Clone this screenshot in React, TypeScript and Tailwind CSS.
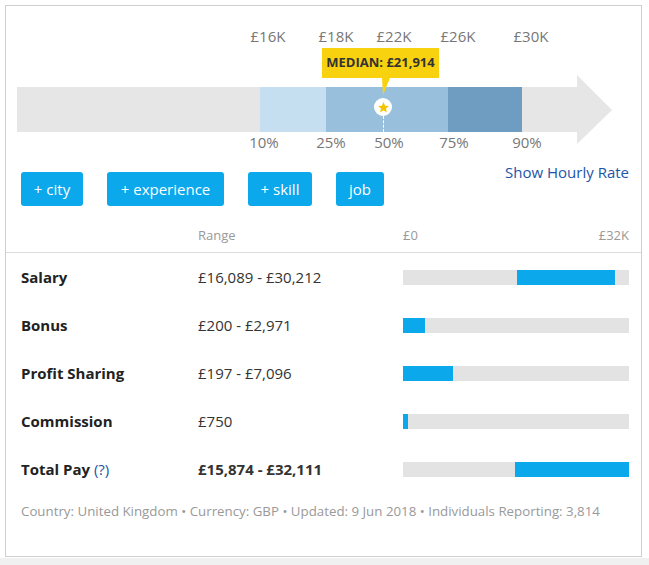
import React from 'react';

const topLabels = [
  { text: '£16K', x: 262 },
  { text: '£18K', x: 330 },
  { text: '£22K', x: 388 },
  { text: '£26K', x: 452 },
  { text: '£30K', x: 525 },
];

const pctLabels = [
  { text: '10%', x: 258 },
  { text: '25%', x: 325 },
  { text: '50%', x: 383 },
  { text: '75%', x: 448 },
  { text: '90%', x: 521 },
];

interface PayRow {
  label: string;
  range: string;
  left: number;
  width: number;
  bold?: boolean;
  help?: boolean;
}

const rows: PayRow[] = [
  { label: 'Salary', range: '£16,089 - £30,212', left: 114, width: 98 },
  { label: 'Bonus', range: '£200 - £2,971', left: 0, width: 22 },
  { label: 'Profit Sharing', range: '£197 - £7,096', left: 0, width: 50 },
  { label: 'Commission', range: '£750', left: 0, width: 5 },
  { label: 'Total Pay', range: '£15,874 - £32,111', left: 112, width: 114, bold: true, help: true },
];

function SalaryChart() {
  return (
    <div className="relative h-[166px]">
      {topLabels.map((l) => (
        <span
          key={l.text}
          className="absolute top-[20px] -translate-x-1/2 text-[15px] leading-[20px] text-[#777]"
          style={{ left: l.x }}
        >
          {l.text}
        </span>
      ))}

      {/* bar */}
      <div className="absolute left-[11px] top-[81px] flex h-[45px] w-[560px] bg-[#e6e6e6]">
        <div className="ml-[243px] w-[66px] bg-[#c6dff0]" />
        <div className="w-[122px] bg-[#98c0dc]" />
        <div className="w-[74px] bg-[#6f9cc1]" />
      </div>
      <svg className="absolute left-[571px] top-[69px]" width="35" height="69" viewBox="0 0 35 69">
        <polygon points="0,0 35,35 0,69" fill="#e6e6e6" />
      </svg>

      {/* median marker */}
      <div className="absolute left-[377px] top-[110px] h-[16px] border-l border-dashed border-white" />
      <div className="absolute left-[368px] top-[92px] flex h-[18px] w-[18px] items-center justify-center rounded-full bg-white">
        <svg width="13" height="13" viewBox="0 0 24 24">
          <polygon
            points="12,2 14.9,8.6 22,9.3 16.6,14 18.2,21 12,17.3 5.8,21 7.4,14 2,9.3 9.1,8.6"
            fill="#f5c400"
          />
        </svg>
      </div>
      <div className="absolute left-[316px] top-[42px] flex h-[30px] w-[117px] items-center justify-center bg-[#f8d20e] text-[13px] font-bold text-[#333]">
        MEDIAN: £21,914
      </div>
      <svg className="absolute left-[376px] top-[72px]" width="10" height="18" viewBox="0 0 10 18">
        <polygon points="0,0 8,0 1,17" fill="#f8d20e" />
      </svg>

      {pctLabels.map((l) => (
        <span
          key={l.text}
          className="absolute top-[126px] -translate-x-1/2 text-[15px] leading-[20px] text-[#777]"
          style={{ left: l.x }}
        >
          {l.text}
        </span>
      ))}
    </div>
  );
}

export default function App() {
  return (
    <div className="flex h-[565px] w-[649px] flex-col bg-white" style={{ fontFamily: '"Open Sans", sans-serif' }}>
      <div className="ml-[5px] mt-[5px] h-[552px] w-[637px] border border-[#cfcfcf] bg-white">
        <SalaryChart />

        <div className="flex h-[34px] items-start pl-[15px] pr-[12px]">
          <div className="flex gap-6">
            <button className="h-[34px] w-[62px] rounded-[3px] bg-[#0ba8ec] text-[15px] text-white">+ city</button>
            <button className="h-[34px] w-[117px] rounded-[3px] bg-[#0ba8ec] text-[15px] text-white">+ experience</button>
            <button className="h-[34px] w-[64px] rounded-[3px] bg-[#0ba8ec] text-[15px] text-white">+ skill</button>
            <button className="h-[34px] w-[48px] rounded-[3px] bg-[#0ba8ec] text-[15px] text-white">job</button>
          </div>
          <a className="ml-auto -mt-[10px] text-[15px] leading-[20px] text-[#1b55a8]">Show Hourly Rate</a>
        </div>

        <div className="flex h-[47px] items-end border-b border-[#dcdcdc] pb-[7px] pl-[15px] pr-[12px] text-[13px] leading-[20px] text-[#999]">
          <span className="w-[177px]" />
          <span className="w-[205px]">Range</span>
          <div className="flex w-[226px] justify-between">
            <span>£0</span>
            <span>£32K</span>
          </div>
        </div>

        {rows.map((r) => (
          <div key={r.label} className="flex h-[48px] items-center pl-[15px] pr-[12px] text-[15px] leading-[20px]">
            <div className="w-[177px] font-bold text-[#222]">
              {r.label}
              {r.help && <span className="font-normal text-[#1b55a8]"> (?)</span>}
            </div>
            <div className={`w-[205px] text-[#333] ${r.bold ? 'font-bold' : ''}`}>{r.range}</div>
            <div className="relative h-[15px] w-[226px] bg-[#e3e3e3]">
              <div className="absolute top-0 h-full bg-[#0ba8ec]" style={{ left: r.left, width: r.width }} />
            </div>
          </div>
        ))}

        <p className="mt-[8px] pl-[15px] text-[13.3px] leading-[20px] text-[#999]">
          Country: United Kingdom • Currency: GBP • Updated: 9 Jun 2018 • Individuals Reporting: 3,814
        </p>
      </div>
      <div className="mt-[1px] flex-1 bg-[#f0f0f0]" />
    </div>
  );
}
